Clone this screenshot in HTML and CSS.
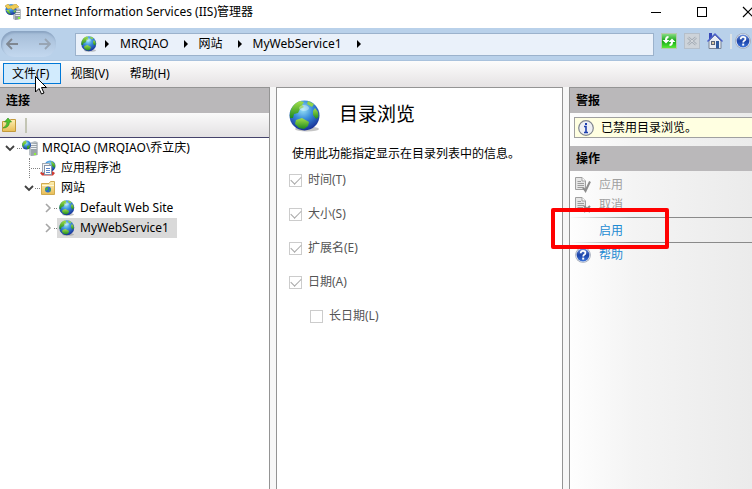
FILE: index.html
```html
<!DOCTYPE html>
<html lang="zh-CN">
<head>
    <meta charset="UTF-8">
    <meta name="viewport" content="width=device-width, initial-scale=1.0">
    <title>Internet Information Services (IIS)管理器</title>
    <link rel="stylesheet" href="styles.css">
</head>
<body>
    <!-- shared icons -->
    <svg class="defs" width="0" height="0" aria-hidden="true">
        <defs>
            <radialGradient id="sea" cx="45%" cy="30%" r="70%">
                <stop offset="0" stop-color="#9be4f7"/>
                <stop offset="0.45" stop-color="#3a8edb"/>
                <stop offset="1" stop-color="#172f96"/>
            </radialGradient>
            <linearGradient id="land" x1="0" y1="0" x2="0" y2="1">
                <stop offset="0" stop-color="#a5e04a"/>
                <stop offset="1" stop-color="#1c8a1e"/>
            </linearGradient>
            <linearGradient id="folder" x1="0" y1="0" x2="0" y2="1">
                <stop offset="0" stop-color="#fdf0b4"/>
                <stop offset="1" stop-color="#e8bd56"/>
            </linearGradient>
            <linearGradient id="green" x1="0" y1="0" x2="0" y2="1">
                <stop offset="0" stop-color="#8fe08a"/>
                <stop offset="0.5" stop-color="#12a512"/>
                <stop offset="1" stop-color="#5ff03c"/>
            </linearGradient>
            <linearGradient id="blue" x1="0" y1="0" x2="0" y2="1">
                <stop offset="0" stop-color="#6f93dc"/>
                <stop offset="0.5" stop-color="#1c43a8"/>
                <stop offset="1" stop-color="#3a72d8"/>
            </linearGradient>
            <symbol id="globe" viewBox="0 0 32 32">
                <ellipse cx="18" cy="29" rx="12" ry="2.5" fill="#8b8b8b" opacity="0.5"/>
                <circle cx="15.500" cy="15.500" r="15" fill="url(#sea)"/>
                <path d="M1 18 C0 9 5 3 11 1 L15 2 L13 5 L15 7 L11 9 L9 13 L5 14 L4 18 Z" fill="url(#land)"/>
                <path d="M19 1 L25 4 L23 7 L18 4 Z" fill="#8fd34b"/>
                <path d="M26 8 L29 12 L29.500 17 L27 19 L24 15 L24 11 Z" fill="url(#land)"/>
                <path d="M7 20 L13 18 L20 22 L19 26 L15 29 L10 28 L6 24 Z" fill="url(#land)"/>
                <ellipse cx="15" cy="8" rx="5" ry="3" fill="#fff" opacity="0.35"/>
            </symbol>
            <symbol id="server" viewBox="0 0 16 16">
                <path d="M7 3 L13 1 L15.500 2 V15 L9 16 L7 15 Z" fill="#b9c0c6"/>
                <path d="M9 4 L15.500 2.500 V15 L9 16 Z" fill="#9ba4ab"/>
                <path d="M9 4.500 H14.500 M9 6.500 H14.500 M9 8.500 H14.500" stroke="#eef1f3" stroke-width="1"/>
                <rect x="12" y="13" width="2" height="2" fill="#8df03a"/>
                <circle cx="4.500" cy="5" r="4.500" fill="url(#sea)"/>
                <path d="M0 5 Q0.500 1 4 0.500 L4.500 3 L2 5 L2.500 8 Z M5 6 L8 5 L7 9 L5 9 Z" fill="url(#land)"/>
            </symbol>
            <symbol id="help" viewBox="0 0 16 16">
                <circle cx="8" cy="8" r="7.800" fill="#9aa3b3"/>
                <circle cx="8" cy="8" r="7.200" fill="#e3e7f0"/>
                <circle cx="8" cy="8" r="6.400" fill="url(#blue)"/>
                <path d="M5.700 6.200 Q5.800 3.900 8 3.900 Q10.400 3.900 10.400 5.900 Q10.400 7 9.200 7.700 Q8.200 8.300 8.200 9.500" fill="none" stroke="#fff" stroke-width="1.700"/>
                <rect x="7.200" y="10.600" width="2" height="2" fill="#fff"/>
            </symbol>
            <symbol id="doc" viewBox="0 0 16 16">
                <path d="M0.500 0.500 H7 L10.500 4 V12.500 H0.500 Z" fill="#e6e6e6" stroke="#a0a0a0"/>
                <path d="M7 0.500 V4 H10.500" fill="#fff" stroke="#a0a0a0"/>
                <path d="M2.500 4.500 H6 M2.500 6.500 H9 M2.500 8.500 H9 M2.500 10.500 H8" stroke="#9c9c9c"/>
            </symbol>
            <symbol id="open" viewBox="0 0 12 12">
                <path d="M2 4 L6 8 L10 4" fill="none" stroke="#404040" stroke-width="1.800"/>
            </symbol>
            <symbol id="closed" viewBox="0 0 12 12">
                <path d="M4 2 L8 6 L4 10" fill="none" stroke="#a6a6a6" stroke-width="1.600"/>
            </symbol>
            <symbol id="arrow" viewBox="0 0 4 8">
                <path d="M0 0 L4 4 L0 8 Z" fill="#000"/>
            </symbol>
        </defs>
    </svg>

    <div class="window">
        <header class="titlebar">
            <svg class="icon" viewBox="0 0 16 16">
                <path d="M8 6 L13 4 L15.500 5 V15 L10 16 L8 15 Z" fill="#b9c0c6"/>
                <path d="M10 7 L15.500 5.500 V15 L10 16 Z" fill="#8f999f"/>
                <path d="M10.500 7.500 H15 M10.500 9.500 H15 M10.500 11.500 H15" stroke="#eef1f3"/>
                <rect x="13" y="13" width="2" height="2" fill="#8df03a"/>
                <circle cx="6" cy="5.500" r="5.500" fill="url(#sea)"/>
                <path d="M0 2 L3 0 L5 2 L11 0 L14 3 L11 4 L8 6 L6 4 L3 5 Z" fill="#efcd55" stroke="#b98e25" stroke-width="0.500"/>
                <path d="M1 6 L4 6 L6 11 L3 9 Z M8 7 L11 6 L10 9 Z" fill="url(#land)"/>
            </svg>
            <span class="title">Internet Information Services (IIS)管理器</span>
            <div class="controls">
                <button aria-label="最小化"><svg width="12" height="12" viewBox="0 0 12 12"><path d="M1 6.500 H11" stroke="#000"/></svg></button>
                <button aria-label="最大化"><svg width="12" height="12" viewBox="0 0 12 12"><rect x="1.500" y="1.500" width="9" height="9" fill="none" stroke="#000"/></svg></button>
                <button aria-label="关闭"><svg width="12" height="12" viewBox="0 0 12 12"><path d="M1 1 L11 11 M11 1 L1 11" stroke="#000" stroke-width="1.200"/></svg></button>
            </div>
        </header>

        <div class="addressbar">
            <div class="history">
                <button aria-label="后退"><svg width="12" height="12" viewBox="0 0 12 12"><path d="M12 6 H1 M6 1 L1 6 L6 11" fill="none" stroke="#7f8791" stroke-width="1.800"/></svg></button>
                <button aria-label="前进"><svg width="12" height="12" viewBox="0 0 12 12"><path d="M0 6 H11 M6 1 L11 6 L6 11" fill="none" stroke="#98a5b4" stroke-width="1.800"/></svg></button>
            </div>
            <nav class="path">
                <svg class="icon"><use href="#globe"/></svg>
                <svg class="sep"><use href="#arrow"/></svg>
                <span>MRQIAO</span>
                <svg class="sep"><use href="#arrow"/></svg>
                <span>网站</span>
                <svg class="sep"><use href="#arrow"/></svg>
                <span>MyWebService1</span>
                <svg class="sep"><use href="#arrow"/></svg>
            </nav>
            <div class="tools">
                <button aria-label="刷新">
                    <svg class="icon" viewBox="0 0 16 16">
                        <rect x="0.500" y="0.500" width="15" height="15" fill="url(#green)" stroke="#b5c9ae"/>
                        <path d="M7.500 3 Q4 3 4 7 H1.500 L5 10.500 L8.500 7 H6 Q6 5 7.500 5 Z M8.500 13 Q12 13 12 9 H14.500 L11 5.500 L7.500 9 H10 Q10 11 8.500 11 Z" fill="#fff"/>
                    </svg>
                </button>
                <button aria-label="停止" disabled>
                    <svg class="icon" viewBox="0 0 16 16">
                        <rect x="0.500" y="0.500" width="15" height="15" fill="#cdd3d9" stroke="#b5bfca"/>
                        <path d="M4 4.500 L12 11.500 M12 4.500 L4 11.500" stroke="#a5adb6" stroke-width="2.500"/>
                        <path d="M4 4.500 L12 11.500 M12 4.500 L4 11.500" stroke="#d5dadf" stroke-width="1"/>
                    </svg>
                </button>
                <button aria-label="主页">
                    <svg class="icon" viewBox="0 0 16 16">
                        <rect x="2" y="0" width="3" height="6" fill="#3648b8"/>
                        <path d="M2 8 L8 2 L14 8 V15.500 H2 Z" fill="#e9edf4" stroke="#7b8494"/>
                        <path d="M0.500 8.500 L8 1 L15.500 8.500" fill="none" stroke="#4a60cc" stroke-width="1.400"/>
                        <rect x="4.500" y="8.500" width="3" height="3" fill="#d9c9a0" stroke="#5a6478"/>
                        <rect x="9" y="8" width="3" height="7.500" fill="#2f5a9c"/>
                    </svg>
                </button>
                <span class="divider"></span>
                <button aria-label="帮助"><svg class="icon"><use href="#help"/></svg></button>
            </div>
        </div>

        <nav class="menubar">
            <button class="active">文件(F)</button>
            <button>视图(V)</button>
            <button>帮助(H)</button>
            <svg class="cursor" viewBox="0 0 12 19">
                <path d="M0.500 0.500 V16 L4 12.500 L6.500 18 L9 17 L6.500 11.500 H11.500 Z" fill="#fff" stroke="#000"/>
            </svg>
        </nav>

        <main class="panels">
            <section class="connections">
                <h2>连接</h2>
                <div class="toolbar">
                    <button aria-label="连接到服务器">
                        <svg class="icon" viewBox="0 0 16 16">
                            <path d="M1.500 4.500 H8 L9.500 2.500 H14.500 V14.500 H1.500 Z" fill="url(#folder)" stroke="#c39a3c"/>
                            <path d="M2 11 Q6 9 6 5 H3.500 L7 1 L10.500 5 H8.500 Q8 11 2 11 Z" fill="#4fc22f" stroke="#2b8a1b" stroke-width="0.600"/>
                        </svg>
                    </button>
                    <span class="divider"></span>
                </div>
                <ul class="tree">
                    <li class="row root">
                        <svg class="chevron"><use href="#open"/></svg>
                        <span class="dots"></span>
                        <svg class="icon"><use href="#server"/></svg>
                        <span class="name">MRQIAO (MRQIAO\乔立庆)</span>
                    </li>
                    <li class="row pool">
                        <span class="dots"></span>
                        <svg class="icon" viewBox="0 0 16 16">
                            <circle cx="10" cy="6" r="5.500" fill="url(#sea)"/>
                            <path d="M11 1 L15 4 L15 8 L12 6 Z" fill="url(#land)"/>
                            <path d="M0 13 L3 11 H12 L15 13 L13 15.500 H2 Z" fill="#cf3a32"/>
                            <rect x="2.500" y="3.500" width="7" height="9" fill="#f2f4f7" stroke="#a3a9b3"/>
                            <rect x="4.500" y="5.500" width="7" height="9" fill="#fff" stroke="#8593a8"/>
                            <path d="M6 8.500 H10 M6 10.500 H10 M6 12.500 H10" stroke="#5c86c9"/>
                        </svg>
                        <span class="name">应用程序池</span>
                    </li>
                    <li class="row sites">
                        <svg class="chevron"><use href="#open"/></svg>
                        <span class="dots"></span>
                        <svg class="icon" viewBox="0 0 16 16">
                            <path d="M1.500 3.500 H9 L10.500 1.500 H14.500 V14.500 H1.500 Z" fill="url(#folder)" stroke="#d0aa50"/>
                            <path d="M2 5.500 H14" stroke="#fff8d8"/>
                            <circle cx="8" cy="9.500" r="3" fill="#2b6fc9"/>
                            <path d="M5 9 L8 7 L8 9 L6 11 Z M9 10 L11 9 L10 12 Z" fill="#4db530"/>
                        </svg>
                        <span class="name">网站</span>
                    </li>
                    <li class="row site">
                        <svg class="chevron"><use href="#closed"/></svg>
                        <span class="dots"></span>
                        <span class="entry">
                            <svg class="icon"><use href="#globe"/></svg>
                            <span class="name">Default Web Site</span>
                        </span>
                    </li>
                    <li class="row site">
                        <svg class="chevron"><use href="#closed"/></svg>
                        <span class="dots"></span>
                        <span class="entry selected">
                            <svg class="icon"><use href="#globe"/></svg>
                            <span class="name">MyWebService1</span>
                        </span>
                    </li>
                </ul>
            </section>

            <section class="feature">
                <div class="feature-head">
                    <svg class="icon-large"><use href="#globe"/></svg>
                    <h1>目录浏览</h1>
                </div>
                <p>使用此功能指定显示在目录列表中的信息。</p>
                <form class="options">
                    <label><input type="checkbox" checked disabled>时间(T)</label>
                    <label><input type="checkbox" checked disabled>大小(S)</label>
                    <label><input type="checkbox" checked disabled>扩展名(E)</label>
                    <label><input type="checkbox" checked disabled>日期(A)</label>
                    <label class="sub"><input type="checkbox" disabled>长日期(L)</label>
                </form>
            </section>

            <aside class="actions">
                <h2>警报</h2>
                <div class="alert">
                    <svg class="icon" viewBox="0 0 16 16">
                        <circle cx="8" cy="8" r="7.300" fill="#eef0f4" stroke="#80868f" stroke-width="1.200"/>
                        <rect x="7" y="3" width="2" height="2" fill="#1c3fae"/>
                        <path d="M6 6.500 H8 V12 M6 12.500 H10" fill="none" stroke="#1c3fae" stroke-width="1.600"/>
                    </svg>
                    <span>已禁用目录浏览。</span>
                </div>
                <h2>操作</h2>
                <div class="action-list">
                    <button disabled>
                        <svg class="icon" viewBox="0 0 16 16"><use href="#doc" width="16" height="16"/><path d="M8 10.500 L10.500 14 L15 4.500" fill="none" stroke="#8c8c8c" stroke-width="2"/></svg>
                        应用
                    </button>
                    <button disabled>
                        <svg class="icon" viewBox="0 0 16 16"><use href="#doc" width="16" height="16"/><path d="M9 9 L15 15 M15 9 L9 15" stroke="#8c8c8c" stroke-width="2"/></svg>
                        取消
                    </button>
                    <div class="enable">
                        <a href="#">启用</a>
                        <span class="highlight"></span>
                    </div>
                    <a class="help" href="#"><svg class="icon"><use href="#help"/></svg>帮助</a>
                </div>
            </aside>
        </main>
    </div>
</body>
</html>
```
FILE: styles.css
```css
* {
    box-sizing: border-box;
}
body {
    margin: 0;
    overflow: hidden;
    background-color: #f7f7f7;
    color: #000000;
    font-family: "Noto Sans", "Noto Sans CJK SC", sans-serif;
    font-size: 12px;
    line-height: 20px;
}
button {
    padding: 0;
    border: 0;
    background: none;
    color: inherit;
    font: inherit;
}
h1, h2, p, ul {
    margin: 0;
    padding: 0;
}
svg {
    display: block;
    flex: none;
}
a {
    color: #1e8bd2;
    text-decoration: none;
}
.defs {
    position: absolute;
}
.icon {
    width: 16px;
    height: 16px;
}
.window {
    display: flex;
    flex-direction: column;
    height: 100vh;
}

/* title bar */
.titlebar {
    display: flex;
    align-items: center;
    height: 28px;
    padding: 0 0 4px 5px;
    background-color: #ffffff;
}
.title {
    flex: 1;
    margin-left: 5px;
    white-space: nowrap;
}
.controls {
    display: flex;
    gap: 34px;
    margin-right: -2px;
}

/* address bar */
.addressbar {
    display: flex;
    align-items: center;
    height: 33px;
    padding: 0 1px;
    background-color: #b9d1ea;
    border-bottom: 1px solid #a9c2dd;
}
.history {
    display: flex;
    align-items: center;
    justify-content: space-between;
    width: 55px;
    height: 26px;
    margin-right: 19px;
    padding: 0 5px;
    border-radius: 13px;
    background: linear-gradient(#a3bbd6, #c3d8ef);
    box-shadow: inset 1px 2px 2px #8ba4c2;
}
.path {
    display: flex;
    flex: 1;
    align-items: center;
    height: 23px;
    padding-left: 5px;
    border: 1px solid #9bb2cc;
    background-color: #eaf1fa;
    white-space: nowrap;
}
.sep {
    width: 4px;
    height: 8px;
    margin: 0 11px 0 15px;
}
.path .icon + .sep {
    margin-left: 8px;
}
.tools {
    display: flex;
    align-items: center;
    gap: 7px;
    padding-left: 7px;
    padding-bottom: 6px;
}
.divider {
    width: 2px;
    height: 15px;
    background-color: #c3c5b4;
}
.tools .divider {
    margin-right: -4px;
    background-color: #dde3e6;
}

/* menu */
.menubar {
    position: relative;
    display: flex;
    align-items: center;
    height: 26px;
    padding: 0 3px 2px;
    background: linear-gradient(#fcfcfc, #e5e2e3);
}
.menubar button {
    height: 21px;
    padding: 0 11px 0 8px;
    border: 1px solid transparent;
    line-height: 19px;
}
.menubar .active {
    border-color: #0078d7;
    background-color: #d2ebfd;
}
.cursor {
    position: absolute;
    left: 35px;
    top: 15px;
    z-index: 1;
    width: 12px;
    height: 19px;
}

/* panels */
.panels {
    display: flex;
    flex: 1;
    gap: 6px;
}
.panels > section, .panels > aside {
    border: 1px solid #949494;
    border-bottom: 0;
}
h2 {
    height: 25px;
    padding-left: 6px;
    background-color: #bab8ba;
    font-size: 12px;
    font-weight: bold;
    line-height: 25px;
}
.panels > .connections {
    width: 270px;
    border-left: 0;
    background-color: #ffffff;
}
.toolbar {
    display: flex;
    align-items: center;
    gap: 8px;
    height: 25px;
    padding-left: 1px;
    border-bottom: 1px solid #45436b;
    background: linear-gradient(#fafafa, #e3e1e3);
}
.tree {
    list-style: none;
}
.row {
    display: flex;
    align-items: center;
    height: 20px;
    white-space: nowrap;
}
.chevron {
    width: 12px;
    height: 12px;
}
.dots {
    width: 5px;
    height: 1px;
    border-top: 1px dotted #808080;
}
.root {
    padding-left: 4px;
}
.root .dots {
    margin-left: 1px;
}
.root .name {
    margin-left: 4px;
}
.pool {
    padding-left: 29px;
}
.pool .dots {
    width: 11px;
    height: 20px;
    border-top: 0;
    border-left: 1px dotted #808080;
    background: repeating-linear-gradient(to right, transparent 0 1px, #808080 1px 2px) no-repeat 0 10px / 11px 1px;
}
.sites {
    padding-left: 23px;
}
.pool .name, .sites .name {
    margin-left: 5px;
}
.site {
    padding-left: 42px;
}
.site .dots {
    width: 3px;
}
.entry {
    display: flex;
    align-items: center;
    height: 20px;
    padding-left: 2px;
}
.entry .name {
    padding: 0 8px 0 5px;
}
.selected {
    background-color: #d9d9d9;
}

.panels > .feature {
    flex: 1;
    padding: 12px;
    background-color: #ffffff;
}
.feature-head {
    display: flex;
    align-items: center;
    height: 32px;
    gap: 18px;
}
.icon-large {
    width: 32px;
    height: 32px;
}
h1 {
    padding-bottom: 4px;
    font-size: 19px;
    font-weight: normal;
    line-height: 28px;
}
.feature p {
    margin: 12px 0 6px 3px;
}
.options {
    display: flex;
    flex-direction: column;
    gap: 14px;
}
.options label {
    display: flex;
    align-items: center;
    gap: 6px;
    color: #555555;
}
.options .sub {
    margin-left: 21px;
}
.options input {
    display: grid;
    place-items: center;
    width: 13px;
    height: 13px;
    margin: 0;
    border: 1px solid #cccccc;
    background-color: #ffffff;
    appearance: none;
}
.options input:checked::before {
    content: "";
    width: 9px;
    height: 5px;
    margin-bottom: 3px;
    border-left: 1px solid #a8a8a8;
    border-bottom: 1px solid #a8a8a8;
    transform: rotate(-45deg);
}

.panels > .actions {
    width: 183px;
    border-right: 0;
    background: linear-gradient(to right, #fefefe, #f4f4f4 35%, #ebebeb);
}
.alert {
    display: flex;
    align-items: center;
    gap: 7px;
    height: 21px;
    margin: 4px 0 8px 4px;
    padding-left: 3px;
    border: 1px solid #a0a0a0;
    border-right: 0;
    background-color: #ffffe1;
}
.action-list {
    display: flex;
    flex-direction: column;
    padding-top: 4px;
}
.action-list button, .help {
    display: flex;
    align-items: center;
    height: 20px;
    padding-left: 5px;
    gap: 8px;
}
.action-list button {
    color: #a0a0a0;
}
.enable {
    position: relative;
    height: 26px;
    margin: 2px 0;
    padding-left: 29px;
    border: solid;
    border-width: 1px 0;
    border-image: linear-gradient(to right, transparent, #8a8a8a 35%) 1;
    line-height: 25px;
}
/* red frame drawn over the panel edges */
.highlight {
    position: absolute;
    left: -19px;
    top: -10px;
    width: 118px;
    height: 41px;
    border: 4px solid #ff0000;
    border-radius: 2px;
    pointer-events: none;
}
```
